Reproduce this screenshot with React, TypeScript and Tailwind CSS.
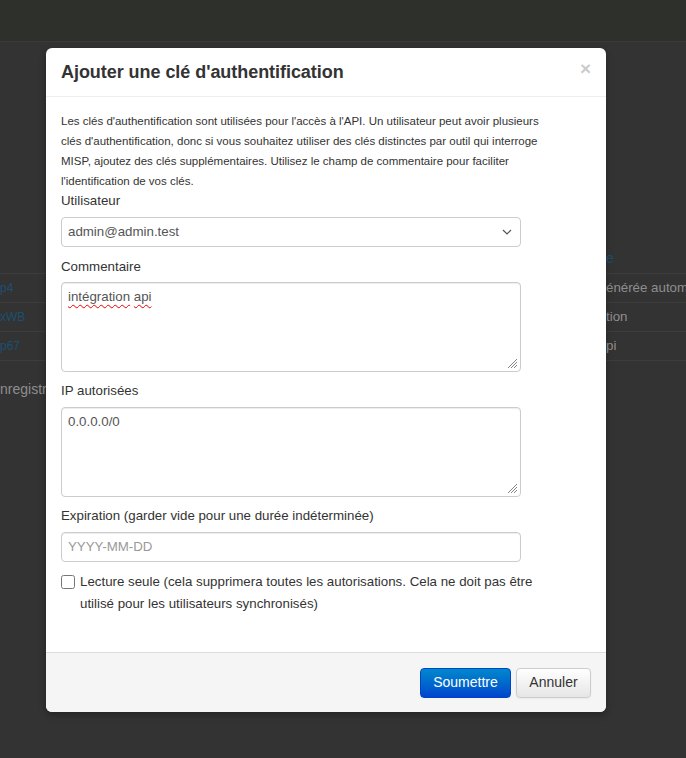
import React from "react";

const Grip = () => (
  <svg className="absolute right-[2px] bottom-[2px]" width="12" height="12" viewBox="0 0 12 12">
    <path d="M11 2L2 11M11 5L5 11M11 8L8 11" stroke="#858585" strokeWidth="1" fill="none" />
  </svg>
);

const rows = [
  { left: "p4", right: "énérée automa" },
  { left: "xWB", right: "tion" },
  { left: "p67", right: "pi" },
];

export default function App() {
  return (
    <div
      className="relative w-[686px] h-[758px] overflow-hidden bg-[#333333]"
      style={{ fontFamily: '"Liberation Sans", Arial, sans-serif' }}
    >
      {/* Page behind the backdrop */}
      <div className="h-[42px] bg-[#2e302c] border-b border-[#3b3b3b]" />
      <div className="pt-[202px]">
        <div className="flex justify-end h-[30px] items-center border-b border-[#3d3d3d]">
          <div className="w-[80px] text-[14px] text-[#1d4f70]">e</div>
        </div>
        {rows.map((r) => (
          <div key={r.left} className="flex justify-between h-[29px] items-center border-b border-[#3d3d3d] text-[12px]">
            <div className="text-[#1d4f70]">{r.left}</div>
            <div className="w-[80px] whitespace-nowrap text-[13.3px] text-[#8e8e8e]">{r.right}</div>
          </div>
        ))}
        <div className="mt-[18px] text-[14px] text-[#8e8e8e]">nregistre</div>
      </div>

      {/* Modal */}
      <div className="absolute left-[46px] top-[48px] w-[560px] h-[664px] bg-white rounded-[6px] shadow-[0_3px_7px_rgba(0,0,0,0.3)] flex flex-col">
        <div className="relative h-[49px] px-[15px] flex items-center border-b border-[#eeeeee]">
          <h3 className="text-[18px] text-[#333] font-bold leading-[30px] tracking-[-0.05px]">
            Ajouter une clé d'authentification
          </h3>
          <span className="absolute right-[15px] top-[11px] text-[19px] font-bold leading-[20px] text-[#cccccc]">×</span>
        </div>

        <div className="flex-1 px-[15px] pt-[14px] text-[13.3px]">
          <p className="text-[11.5px] leading-[20px] text-[#333]">
            Les clés d'authentification sont utilisées pour l'accès à l'API. Un utilisateur peut avoir plusieurs
            <br />
            clés d'authentification, donc si vous souhaitez utiliser des clés distinctes par outil qui interroge
            <br />
            MISP, ajoutez des clés supplémentaires. Utilisez le champ de commentaire pour faciliter
            <br />
            l'identification de vos clés.
          </p>

          <label className="block leading-[20px] text-[#333] mb-[6px]">Utilisateur</label>
          <div className="w-[460px] h-[30px] border border-[#cccccc] rounded-[4px] flex items-center justify-between pl-[6px] pr-[8px] text-[#555]">
            <span>admin@admin.test</span>
            <svg width="10" height="6" viewBox="0 0 10 6">
              <path d="M1 1L5 5L9 1" stroke="#555" strokeWidth="1.2" fill="none" />
            </svg>
          </div>

          <label className="block mt-[10px] leading-[20px] text-[#333] mb-[5px]">Commentaire</label>
          <div className="relative w-[460px] h-[90px] border border-[#cccccc] rounded-[4px] px-[6px] py-[4px] leading-[20px] text-[#555] shadow-[inset_0_1px_1px_rgba(0,0,0,0.075)]">
            <span className="underline decoration-wavy decoration-[#e00] decoration-1 underline-offset-[3px]">intégration</span>{" "}
            <span className="underline decoration-wavy decoration-[#e00] decoration-1 underline-offset-[3px]">api</span>
            <Grip />
          </div>

          <label className="block mt-[9px] leading-[20px] text-[#333] mb-[6px]">IP autorisées</label>
          <div className="relative w-[460px] h-[90px] border border-[#cccccc] rounded-[4px] px-[6px] py-[4px] leading-[20px] text-[#555] shadow-[inset_0_1px_1px_rgba(0,0,0,0.075)]">
            0.0.0.0/0
            <Grip />
          </div>

          <label className="block mt-[9px] leading-[20px] text-[#333] mb-[6px]">
            Expiration (garder vide pour une durée indéterminée)
          </label>
          <div className="w-[460px] h-[30px] border border-[#cccccc] rounded-[4px] flex items-center px-[6px] text-[#999] shadow-[inset_0_1px_1px_rgba(0,0,0,0.075)]">
            YYYY-MM-DD
          </div>

          <div className="mt-[9px] flex items-start gap-[5px]">
            <input type="checkbox" className="mt-[4px] w-[14px] h-[14px] shrink-0" />
            <span className="leading-[22px] text-[#333]">
              Lecture seule (cela supprimera toutes les autorisations. Cela ne doit pas être
              <br />
              utilisé pour les utilisateurs synchronisés)
            </span>
          </div>
        </div>

        <div className="h-[60px] bg-[#f5f5f5] border-t border-[#dddddd] rounded-b-[6px] flex items-center justify-end gap-[5px] px-[15px]">
          <button className="h-[30px] w-[91px] rounded-[4px] border border-[#0044cc] bg-gradient-to-b from-[#0088cc] to-[#0044cc] text-white text-[14px]">
            Soumettre
          </button>
          <button className="h-[30px] w-[75px] rounded-[4px] border border-[#cccccc] bg-gradient-to-b from-white to-[#e6e6e6] text-[#333] text-[14px] shadow-[0_1px_2px_rgba(0,0,0,0.05)]">
            Annuler
          </button>
        </div>
      </div>
    </div>
  );
}
